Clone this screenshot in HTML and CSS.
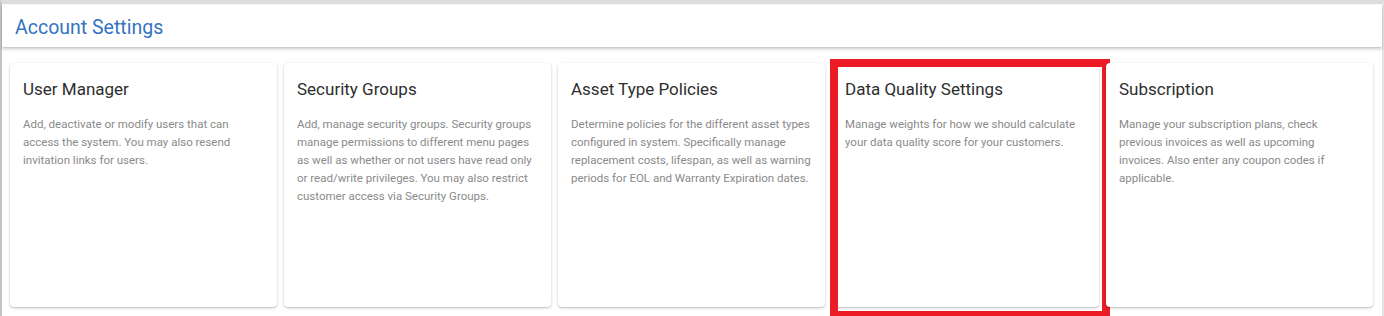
FILE: index.html
```html
<!DOCTYPE html>
<html>
<head>
<meta charset="utf-8">
<link rel="stylesheet" href="styles.css">
</head>
<body>
<div class="page">
  <div class="header"><h1 class="title">Account Settings</h1></div>
  <div class="cards">
    <div class="card">
      <h2 class="card-title">User Manager</h2>
      <p class="card-text">Add, deactivate or modify users that can access the system. You may also resend invitation links for users.</p>
    </div>
    <div class="card">
      <h2 class="card-title">Security Groups</h2>
      <p class="card-text">Add, manage security groups. Security groups manage permissions to different menu pages as well as whether or not users have read only or read/write privileges. You may also restrict customer access via Security Groups.</p>
    </div>
    <div class="card">
      <h2 class="card-title">Asset Type Policies</h2>
      <p class="card-text">Determine policies for the different asset types configured in system. Specifically manage replacement costs, lifespan, as well as warning periods for EOL and Warranty Expiration dates.</p>
    </div>
    <div class="card card-highlight">
      <h2 class="card-title">Data Quality Settings</h2>
      <p class="card-text">Manage weights for how we should calculate your data quality score for your customers.</p>
      <div class="highlight"></div>
    </div>
    <div class="card">
      <h2 class="card-title">Subscription</h2>
      <p class="card-text">Manage your subscription plans, check previous invoices as well as upcoming invoices. Also enter any coupon codes if applicable.</p>
    </div>
  </div>
</div>
</body>
</html>
```

FILE: styles.css
```css
html, body {
  margin: 0;
  padding: 0;
  background: #ffffff;
  overflow: hidden;
}
body {
  font-family: Roboto, "Liberation Sans", sans-serif;
  width: 1384px;
  height: 316px;
}
.page {
  box-sizing: border-box;
  height: 316px;
  border-top: 4px solid #dcdcdc;
  border-left: 2px solid #c4c4c4;
  border-right: 2px solid #e4e4e4;
  padding-top: 1px;
}
.header {
  background: #fff;
  height: 42px;
  box-shadow: 0 2px 3px rgba(0,0,0,0.22), 0 0 1px rgba(0,0,0,0.12);
  display: flex;
  align-items: center;
  padding-left: 13px;
}
.title {
  margin: 0;
  font-size: 19.5px;
  font-weight: 400;
  color: #3474c0;
  position: relative;
  top: 1px;
}
.cards {
  display: flex;
  gap: 7px;
  padding: 16px 9px 0 8px;
}
.card {
  position: relative;
  box-sizing: border-box;
  width: 267px;
  height: 244px;
  background: #fff;
  border-radius: 4px;
  box-shadow: 0 1px 3px rgba(0,0,0,0.2), 0 1px 1px rgba(0,0,0,0.08), 0 0 1px rgba(0,0,0,0.06);
  padding: 16px 13px;
}
.card-title {
  margin: 0;
  font-size: 17px;
  font-weight: 400;
  color: #2e2e2e;
  line-height: 20px;
}
.card-text {
  margin: 16px 0 0;
  font-size: 11.5px;
  line-height: 18px;
  color: #8a8a8a;
}
.highlight {
  position: absolute;
  left: -2px;
  top: -4px;
  right: -11px;
  bottom: -12px;
  border: 8px solid #ed1c24;
  pointer-events: none;
}
```
